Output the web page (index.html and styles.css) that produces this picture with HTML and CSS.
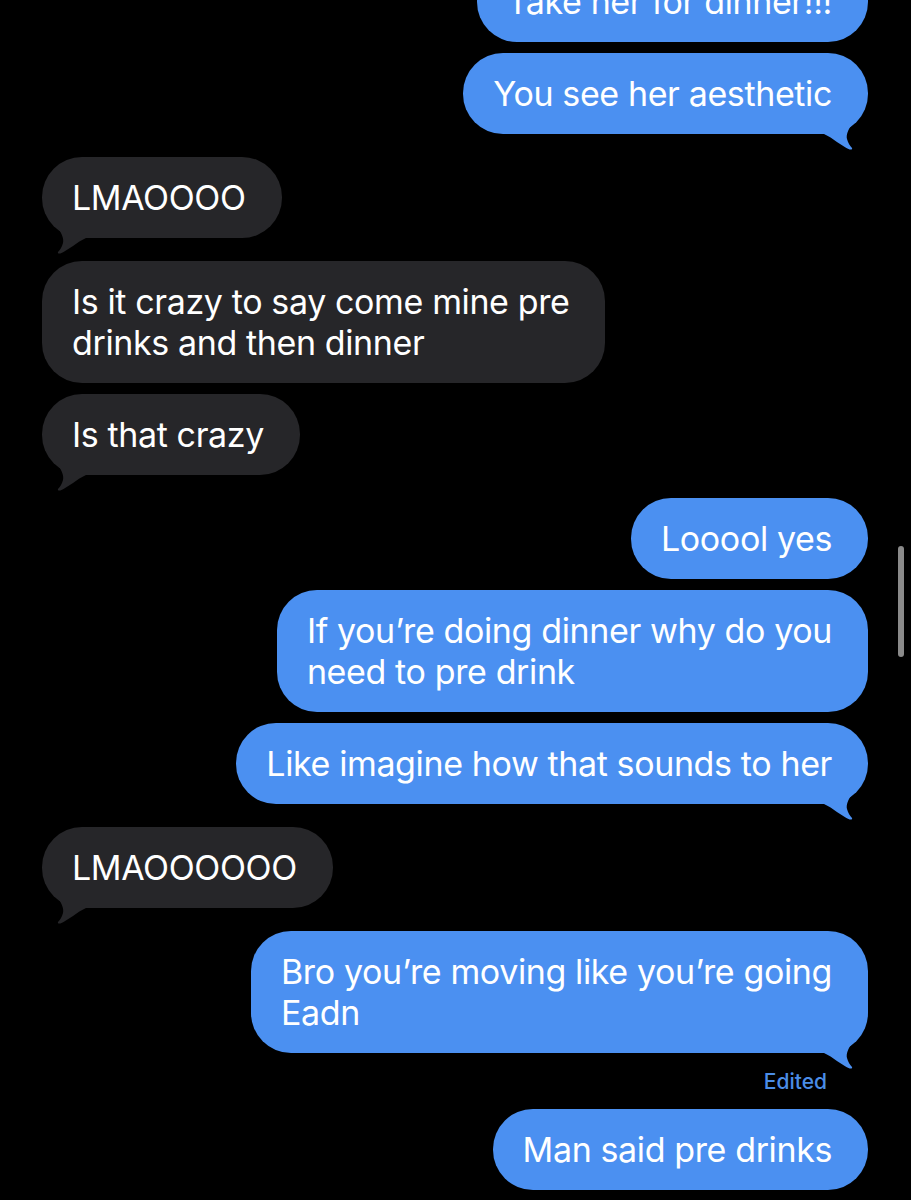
FILE: index.html
```html
<!DOCTYPE html>
<html lang="en">
<head>
  <meta charset="UTF-8">
  <meta name="viewport" content="width=device-width, initial-scale=1.0">
  <title>Messages</title>
  <link rel="stylesheet" href="styles.css">
</head>
<body>

  <div class="thread">
    <div class="msg sent first">
      <div class="bubble">Take her for dinner!!!</div>
    </div>
    <div class="msg sent">
      <div class="bubble">You see her aesthetic
        <svg class="tail" viewBox="0 0 44 44"><path d="M0 18 L28 18 C24 24 22 29 23 33 C24 37 26 40 28 42 C28.6 43.2 27.2 44 25.6 43.4 C17 40 9 32 0 28 Z"/></svg>
      </div>
    </div>

    <div class="msg recv after-tail">
      <div class="bubble">LMAOOOO
        <svg class="tail" viewBox="0 0 44 44"><path d="M0 18 L28 18 C24 24 22 29 23 33 C24 37 26 40 28 42 C28.6 43.2 27.2 44 25.6 43.4 C17 40 9 32 0 28 Z"/></svg>
      </div>
    </div>
    <div class="msg recv after-tail">
      <div class="bubble">Is it crazy to say come mine pre<br>drinks and then dinner</div>
    </div>
    <div class="msg recv">
      <div class="bubble">Is that crazy
        <svg class="tail" viewBox="0 0 44 44"><path d="M0 18 L28 18 C24 24 22 29 23 33 C24 37 26 40 28 42 C28.6 43.2 27.2 44 25.6 43.4 C17 40 9 32 0 28 Z"/></svg>
      </div>
    </div>

    <div class="msg sent after-tail">
      <div class="bubble">Looool yes</div>
    </div>
    <div class="msg sent">
      <div class="bubble">If you’re doing dinner why do you<br>need to pre drink</div>
    </div>
    <div class="msg sent">
      <div class="bubble">Like imagine how that sounds to her
        <svg class="tail" viewBox="0 0 44 44"><path d="M0 18 L28 18 C24 24 22 29 23 33 C24 37 26 40 28 42 C28.6 43.2 27.2 44 25.6 43.4 C17 40 9 32 0 28 Z"/></svg>
      </div>
    </div>

    <div class="msg recv after-tail">
      <div class="bubble">LMAOOOOOO
        <svg class="tail" viewBox="0 0 44 44"><path d="M0 18 L28 18 C24 24 22 29 23 33 C24 37 26 40 28 42 C28.6 43.2 27.2 44 25.6 43.4 C17 40 9 32 0 28 Z"/></svg>
      </div>
    </div>

    <div class="msg sent after-tail">
      <div class="bubble">Bro you’re moving like you’re going<br>Eadn
        <svg class="tail" viewBox="0 0 44 44"><path d="M0 18 L28 18 C24 24 22 29 23 33 C24 37 26 40 28 42 C28.6 43.2 27.2 44 25.6 43.4 C17 40 9 32 0 28 Z"/></svg>
      </div>
    </div>
    <div class="edited">Edited</div>
    <div class="msg sent">
      <div class="bubble">Man said pre drinks</div>
    </div>
  </div>

  <div class="scrollbar"></div>

</body>
</html>
```

FILE: styles.css
```css
body {
  margin: 0;
  background-color: #000;
  font-family: Inter, "Noto Sans", sans-serif;
  overflow: hidden;
}

.thread {
  display: flex;
  flex-direction: column;
  padding: 0 43px 0 42px;
}

.msg {
  display: flex;
  margin-top: 11px;
}

.msg.after-tail {
  margin-top: 23px;
}

.msg.first {
  margin-top: -39px;
}

.msg.sent {
  justify-content: flex-end;
}

.msg.recv {
  justify-content: flex-start;
}

.bubble {
  position: relative;
  padding: 20px 36px 20px 30px;
  border-radius: 40px;
  font-size: 34px;
  line-height: 41px;
  letter-spacing: -0.38px;
  color: #fff;
  white-space: nowrap;
}

.sent .bubble {
  background-color: #4b90f1;
}

.recv .bubble {
  background-color: #262629;
}

.tail {
  position: absolute;
  bottom: -16px;
  width: 44px;
  height: 44px;
}

.sent .tail {
  right: 0;
  fill: #4b90f1;
}

.recv .tail {
  left: 0;
  fill: #262629;
  transform: scaleX(-1);
}

.edited {
  align-self: flex-end;
  margin: 15px 41px 2px 0;
  font-size: 21px;
  line-height: 28px;
  font-weight: 500;
  color: #4b8de6;
}

.scrollbar {
  position: absolute;
  top: 546px;
  left: 898px;
  width: 6px;
  height: 111px;
  border-radius: 3px;
  background-color: #8a8a8a;
}
```
